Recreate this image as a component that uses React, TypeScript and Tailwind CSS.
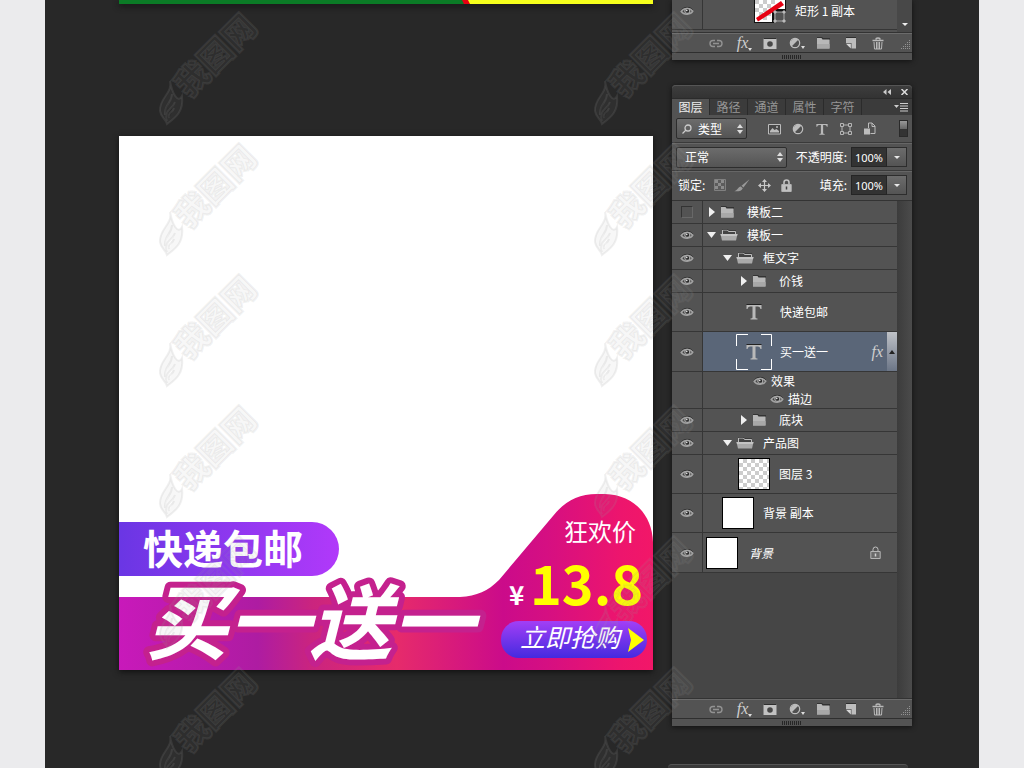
import { useState } from "react";
import type { ReactNode } from "react";

type LayerKind = "folder" | "open" | "text" | "checker" | "white";

type Layer = {
  id: number;
  name: string;
  kind: LayerKind;
  visible: boolean;
  indent: string;
  height: string;
  selected?: boolean;
  locked?: boolean;
};

const LAYERS: Layer[] = [
  { id: 1, name: "模板二", kind: "folder", visible: false, indent: "pl-1", height: "h-[23px]" },
  { id: 2, name: "模板一", kind: "open", visible: true, indent: "pl-1", height: "h-[23px]" },
  { id: 3, name: "框文字", kind: "open", visible: true, indent: "pl-5", height: "h-[23px]" },
  { id: 4, name: "价钱", kind: "folder", visible: true, indent: "pl-9", height: "h-[23px]" },
  { id: 5, name: "快递包邮", kind: "text", visible: true, indent: "pl-[33px]", height: "h-[39px]" },
  { id: 6, name: "买一送一", kind: "text", visible: true, indent: "pl-[33px]", height: "h-10", selected: true },
  { id: 7, name: "底块", kind: "folder", visible: true, indent: "pl-9", height: "h-[23px]" },
  { id: 8, name: "产品图", kind: "open", visible: true, indent: "pl-5", height: "h-[23px]" },
  { id: 9, name: "图层 3", kind: "checker", visible: true, indent: "pl-[35px]", height: "h-[39px]" },
  { id: 10, name: "背景 副本", kind: "white", visible: true, indent: "pl-[19px]", height: "h-[39px]" },
  { id: 11, name: "背景", kind: "white", visible: true, indent: "pl-[3px]", height: "h-10", locked: true },
];

const TABS = ["图层", "路径", "通道", "属性", "字符"];

const WATERMARK_ROWS = [0, 1, 2, 3, 4, 5];

/* ---------- icons ---------- */

const EyeIcon = () => (
  <svg width="14" height="10" viewBox="0 0 14 10" fill="none">
    <path d="M1 4.500C3.500 .6 10 .2 13 4" stroke="#2a2a2a" strokeWidth="1" />
    <path d="M1.200 5.500C3.500 1.800 10 1.500 12.800 5.200C10.800 9 3.800 9.200 1.200 5.500Z" fill="#454545" stroke="#a2a2a2" strokeWidth="1.500" />
    <circle cx="7.300" cy="4.900" r="2.500" fill="#2b2b2b" stroke="#a8a8a8" strokeWidth="1.200" />
    <circle cx="6.700" cy="4.300" r=".9" fill="#d8d8d8" />
  </svg>
);

const FolderIcon = () => (
  <svg width="15" height="12" viewBox="0 0 15 12">
    <path d="M1 1V0H6L7 1H14V3H1Z" fill="#333" />
    <path d="M1 11.500V1H5.500L6.500 2.500H13.500V11.500Z" fill="#b8b8b8" />
    <path d="M1 11.500V7H13.500V11.500Z" fill="#a8a8a8" />
  </svg>
);

const OpenFolderIcon = () => (
  <svg width="18" height="12" viewBox="0 0 18 12" fill="none">
    <path d="M2.500 5V1H7.500L8.500 2.500H15.500V5" fill="#444" stroke="#bdbdbd" />
    <path d="M2 .5H8L9 1.500H16" stroke="#2c2c2c" strokeWidth=".6" />
    <path d="M.5 5H17.500L16 11.500H2Z" fill="#aaa" />
    <path d="M.5 5H17.500L17 7H1Z" fill="#c4c4c4" />
  </svg>
);

const TypeIcon = ({ size = 16 }: { size?: number }) => (
  <svg width={size} height={size} viewBox="0 0 16 16">
    <path d="M.5 0H15.500V1H.5Z" fill="#222" />
    <path d="M.5 1H15.500V5H14.500Q14.200 2.500 12 2.500H9.500V13.500Q9.500 14.500 11.500 14.500V15.500H4.500V14.500Q6.500 14.500 6.500 13.500V2.500H4Q1.800 2.500 1.500 5H.5Z" fill="#b9b9b9" />
  </svg>
);

const LinkIcon = () => (
  <svg width="14" height="9" viewBox="0 0 14 9" fill="none" stroke="#929292" strokeWidth="1.400">
    <path d="M6 1.500H4A3 3 0 0 0 4 7.500H6M8 1.500H10A3 3 0 0 1 10 7.500H8M4 4.500H10" />
  </svg>
);

const FxIcon = ({ arrow = false }: { arrow?: boolean }) => (
  <span className="relative font-['Liberation_Serif',serif] text-base leading-4 text-[#cfcfcf] italic">
    fx
    {arrow && (
      <svg className="absolute -right-1 bottom-0" width="4" height="3" viewBox="0 0 4 3">
        <path d="M0 0H4L2 3Z" fill="#ddd" />
      </svg>
    )}
  </span>
);

const MaskIcon = () => (
  <svg width="14" height="11" viewBox="0 0 14 11">
    <path d="M.5 0H13.500V11H.5Z" fill="#c2c2c2" />
    <path d="M.5 0H13.500V1H.5Z" fill="#2f2f2f" />
    <circle cx="7" cy="6" r="2.800" fill="#474747" />
  </svg>
);

const AdjustIcon = ({ arrow = false }: { arrow?: boolean }) => (
  <svg width="16" height="12" viewBox="0 0 16 12">
    <circle cx="6" cy="6" r="4.700" fill="#505050" stroke="#bcbcbc" strokeWidth="1.200" />
    <path d="M9.500 2.500A5 5 0 0 0 2.500 9.500Z" fill="#bcbcbc" />
    {arrow && <path d="M12 9H16L14 12Z" fill="#ddd" />}
  </svg>
);

const NewLayerIcon = () => (
  <svg width="12" height="12" viewBox="0 0 12 12">
    <path d="M1 0H11V1H1Z" fill="#2f2f2f" />
    <path d="M1 1H11V11.500H6.500V6H1Z" fill="#bdbdbd" />
    <path d="M1 6.800L5.800 11.500V6.800Z" fill="#d8d8d8" />
  </svg>
);

const TrashIcon = () => (
  <svg width="12" height="13" viewBox="0 0 12 13" fill="none" stroke="#b9b9b9">
    <path d="M4 2.500C4 .5 8 .5 8 2.500M.5 3.500H11.500" strokeWidth="1.500" />
    <path d="M2 5L2.500 12H9.500L10 5M4.500 5V12M6 5V12M7.500 5V12" />
  </svg>
);

const ImageIcon = () => (
  <svg width="13" height="12" viewBox="0 0 13 12">
    <path d="M.5 1.500H12.500V11H.5Z" fill="#484848" stroke="#bcbcbc" />
    <path d="M2 9.500V8L4.500 5L6.500 7L8.500 6L11 8V9.500Z" fill="#bcbcbc" />
    <circle cx="9" cy="4" r="1" fill="#bcbcbc" />
  </svg>
);

const ShapeIcon = () => (
  <svg width="12" height="12" viewBox="0 0 12 12" fill="#555" stroke="#b5b5b5">
    <path d="M2 2H10V10H2Z" fill="none" />
    <path d="M.5.5H3.500V3.500H.5ZM8.500.5H11.500V3.500H8.500ZM.5 8.500H3.500V11.500H.5ZM8.500 8.500H11.500V11.500H8.500Z" />
  </svg>
);

const SmartIcon = () => (
  <svg width="12" height="13" viewBox="0 0 12 13" fill="none">
    <path d="M4.500 6V1H8L11 4V11.500H6.500" stroke="#bcbcbc" />
    <path d="M8 1V4.500H11" stroke="#bcbcbc" />
    <path d="M0 6.500H6V12.500H0Z" fill="#bcbcbc" />
  </svg>
);

const LockIcon = ({ thin = false }: { thin?: boolean }) => (
  <svg width="11" height="13" viewBox="0 0 11 13" fill="none">
    <path d="M3 6V3.500A2.500 2.500 0 0 1 8 3.500V6" stroke="#c2c2c2" strokeWidth={thin ? 1 : 1.6} />
    <path d="M.8 5.500H10.200V12.500H.8Z" fill={thin ? "#6a6a6a" : "#c2c2c2"} stroke="#b4b4b4" />
    <path d="M5.500 7.500V10.500" stroke={thin ? "#d0d0d0" : "#444"} strokeWidth="1.500" />
  </svg>
);

const TransparentIcon = () => (
  <svg width="12" height="12" viewBox="0 0 12 12">
    <path d="M.5.5H11.500V11.500H.5Z" fill="#5c5c5c" stroke="#808080" />
    <path d="M1 1H4V4H1ZM7 1H10V4H7ZM4 4H7V7H4ZM1 7H4V10H1ZM7 7H10V10H7Z" fill="#8c8c8c" />
  </svg>
);

const BrushIcon = () => (
  <svg width="16" height="13" viewBox="0 0 16 13" fill="#9a9a9a">
    <path d="M15.500.3L9.500 8.500L7.500 6.800Z" />
    <path d="M6.800 7.500L8.800 9.300C7.500 12.500 4 12.500.3 12.200C3.500 11.500 4 8 6.800 7.500Z" />
  </svg>
);

const MoveIcon = () => (
  <svg width="13" height="13" viewBox="0 0 13 13">
    <path d="M6.500 1V12M1 6.500H12" stroke="#c8c8c8" strokeWidth="1.200" />
    <path d="M6.500 0L9 3H4ZM6.500 13L9 10H4ZM0 6.500L3 4V9ZM13 6.500L10 4V9Z" fill="#c8c8c8" />
  </svg>
);

const UpDownIcon = () => (
  <svg className="pointer-events-none absolute top-1/2 right-1 -translate-y-1/2" width="6" height="10" viewBox="0 0 6 10">
    <path d="M3 0L6 4H0ZM3 10L6 6H0Z" fill="#ddd" />
  </svg>
);

const Disclosure = ({ open }: { open: boolean }) => (
  <svg width="9" height="10" viewBox="0 0 9 10" fill="#f0f0f0">
    {open ? <path d="M0 2H9L4.500 8Z" /> : <path d="M2 0L8 5L2 10Z" />}
  </svg>
);

/* ---------- small parts ---------- */

const IconButton = ({ label, width, children }: { label: string; width: string; children: ReactNode }) => (
  <button type="button" aria-label={label} className={`flex h-4 shrink-0 items-center justify-center ${width}`}>
    {children}
  </button>
);

const PercentField = ({ id, label }: { id: string; label: string }) => {
  const [value, setValue] = useState("100%");

  return (
    <div className="ml-auto flex items-center">
      <label htmlFor={id} className="mr-1 whitespace-nowrap">{label}:</label>
      <input
        id={id}
        value={value}
        onChange={(e) => setValue(e.target.value)}
        className="h-5 w-9 border border-[#252525] bg-[#333] text-center font-['Noto_Sans',sans-serif] text-[11px] text-white"
      />
      <button
        type="button"
        aria-label="展开"
        className="flex h-5 w-5 items-center justify-center border border-l-0 border-[#2d2d2d] bg-linear-to-b from-[#6c6c6c] to-[#545454]"
      >
        <svg width="6" height="3" viewBox="0 0 6 3"><path d="M0 0H6L3 3Z" fill="#e8e8e8" /></svg>
      </button>
    </div>
  );
};

const PanelSelect = ({ label, options, className }: { label: string; options: string[]; className: string }) => (
  <div className="relative">
    <select
      aria-label={label}
      className={`block h-[21px] appearance-none rounded-xs border border-[#2d2d2d] bg-linear-to-b from-[#6c6c6c] to-[#545454] text-white ${className}`}
    >
      {options.map((option) => (
        <option key={option}>{option}</option>
      ))}
    </select>
    <UpDownIcon />
  </div>
);

const PanelFooter = () => (
  <div>
    <div className="flex h-[19px] items-center border-t border-[#6b6b6b] bg-[#535353] pl-[30px]">
      <IconButton label="链接图层" width="w-[27px]"><LinkIcon /></IconButton>
      <IconButton label="图层样式" width="w-[27px]"><FxIcon arrow /></IconButton>
      <IconButton label="图层蒙版" width="w-[27px]"><MaskIcon /></IconButton>
      <IconButton label="调整图层" width="w-[27px]"><AdjustIcon arrow /></IconButton>
      <IconButton label="新建组" width="w-[27px]"><FolderIcon /></IconButton>
      <IconButton label="新建图层" width="w-[27px]"><NewLayerIcon /></IconButton>
      <IconButton label="删除图层" width="w-[27px]"><TrashIcon /></IconButton>
      <svg className="mt-auto mr-px mb-0.5 ml-auto" width="10" height="10" viewBox="0 0 10 10">
        <path d="M8.500 0V10M6.500 2V10M4.500 4V10M2.500 6V10M.5 8V10" stroke="#929292" strokeDasharray="1 1" />
      </svg>
    </div>
    <div className="flex h-2 items-center justify-center border-t border-[#2f2f2f] bg-[#535353]">
      <svg width="20" height="4" viewBox="0 0 20 4">
        <path d="M0 2H20" stroke="#262626" strokeWidth="4" strokeDasharray="1 1" />
      </svg>
    </div>
  </div>
);

const LayerThumb = ({ layer }: { layer: Layer }) => {
  if (layer.kind === "folder" || layer.kind === "open") {
    const open = layer.kind === "open";
    return (
      <div className="flex w-10 items-center gap-1">
        <Disclosure open={open} />
        {open ? <OpenFolderIcon /> : <FolderIcon />}
      </div>
    );
  }
  if (layer.kind === "text") {
    return (
      <div className="relative mr-2 flex size-9 items-center justify-center">
        <TypeIcon />
        {layer.selected && (
          <svg className="absolute inset-0" width="36" height="36" viewBox="0 0 36 36" fill="none" stroke="#fff">
            <path d="M.5 12V.5H12M25 .5H35.500V12M35.500 25V35.500H25M12 35.500H.5V25" />
          </svg>
        )}
      </div>
    );
  }
  return (
    <div className="w-[41px]">
      <div
        className={`size-8 border border-black ${
          layer.kind === "checker"
            ? "bg-[conic-gradient(#ccc_25%,#fff_0_50%,#ccc_0_75%,#fff_0)] bg-size-[8px_8px]"
            : "bg-white"
        }`}
      />
    </div>
  );
};

const Effects = () => (
  <div className="flex h-[37px] border-b border-[#363636] bg-[#535353]">
    <div className="w-[31px] border-r border-[#363636]" />
    <div className="flex flex-col leading-[18px]">
      <div className="flex items-center gap-1 pl-[50px]"><EyeIcon />效果</div>
      <div className="flex items-center gap-1 pl-[67px]"><EyeIcon />描边</div>
    </div>
  </div>
);

const LayerRow = ({ layer, onToggle }: { layer: Layer; onToggle: (id: number) => void }) => (
  <li>
    <div className={`flex border-b border-[#363636] bg-[#535353] ${layer.height}`}>
      <button
        type="button"
        aria-label={`显示 ${layer.name}`}
        aria-pressed={layer.visible}
        onClick={() => onToggle(layer.id)}
        className="flex w-[31px] items-center justify-center border-r border-[#363636]"
      >
        {layer.visible ? <EyeIcon /> : <span className="size-3 border border-[#333] border-r-[#686868] border-b-[#686868]" />}
      </button>
      <div className={`flex min-w-0 flex-1 items-center ${layer.indent} ${layer.selected ? "bg-[#5a6678]" : ""}`}>
        <LayerThumb layer={layer} />
        <span className={layer.locked ? "pl-0.5 italic" : ""}>{layer.name}</span>
        {layer.locked && <span className="mr-4 ml-auto"><LockIcon thin /></span>}
        {layer.selected && (
          <div className="ml-auto flex h-full items-center gap-1">
            <FxIcon />
            <button
              type="button"
              aria-label="折叠效果"
              className="flex h-full w-2.5 items-center justify-center bg-linear-to-b from-[#bfc2c7] to-[#6c7687]"
            >
              <svg width="6" height="4" viewBox="0 0 6 4"><path d="M0 4H6L3 0Z" fill="#222" /></svg>
            </button>
          </div>
        )}
      </div>
    </div>
    {layer.selected && <Effects />}
  </li>
);

const LayersPanel = () => {
  const [layers, setLayers] = useState(LAYERS);
  const [activeTab, setActiveTab] = useState(TABS[0]);

  const handleToggle = (id: number) => {
    setLayers(layers.map((layer) => (layer.id === id ? { ...layer, visible: !layer.visible } : layer)));
  };

  return (
    <section className="mt-[25px] rounded-t-sm bg-[#535353] shadow-[0_1px_5px_#111]">
      <header className="flex h-[13px] items-center justify-end gap-2.5 rounded-t-sm border-t border-[#555] bg-linear-to-b from-[#3d3d3d] to-[#333] pr-1">
        <button type="button" aria-label="折叠面板">
          <svg width="8" height="6" viewBox="0 0 8 6" fill="#ccc"><path d="M3.500 0V6L0 3ZM8 0V6L4.500 3Z" /></svg>
        </button>
        <button type="button" aria-label="关闭面板">
          <svg width="7" height="6" viewBox="0 0 7 6" stroke="#ddd" strokeWidth="1.500"><path d="M.5 0L6.500 6M6.500 0L.5 6" /></svg>
        </button>
      </header>

      <div className="flex h-[17px] bg-[#3b3b3b]" role="tablist">
        {TABS.map((tab) => (
          <button
            key={tab}
            type="button"
            role="tab"
            aria-selected={tab === activeTab}
            onClick={() => setActiveTab(tab)}
            className={`w-[38px] border-t border-r border-[#2b2b2b] leading-4 ${
              tab === activeTab ? "bg-[#535353] text-[#eee]" : "text-[#969696]"
            }`}
          >
            {tab}
          </button>
        ))}
        <button type="button" aria-label="面板菜单" className="flex flex-1 items-center justify-end border-t border-[#2b2b2b] pr-1">
          <svg width="14" height="9" viewBox="0 0 14 9">
            <path d="M0 2H5L2.500 5Z" fill="#ccc" />
            <path d="M6 .5H14M6 3H14M6 5.500H14M6 8H14" stroke="#ccc" />
          </svg>
        </button>
      </div>

      <div className="flex h-7 items-center border-b border-[#3a3a3a] pr-1 pl-1">
        <div className="relative">
          <PanelSelect label="图层过滤" options={["类型", "名称", "效果"]} className="w-[71px] pl-[21px]" />
          <svg className="pointer-events-none absolute top-1.5 left-1.5" width="10" height="10" viewBox="0 0 10 10" fill="none" stroke="#ccc" strokeWidth="1.300">
            <circle cx="6" cy="4" r="3" />
            <path d="M4 6L.5 9.500" />
          </svg>
        </div>
        <div className="flex pl-[15px]">
          <IconButton label="像素图层" width="w-6"><ImageIcon /></IconButton>
          <IconButton label="调整图层过滤" width="w-6"><span className="pl-1"><AdjustIcon /></span></IconButton>
          <IconButton label="文字图层" width="w-6"><TypeIcon size={12} /></IconButton>
          <IconButton label="形状图层" width="w-6"><ShapeIcon /></IconButton>
          <IconButton label="智能对象" width="w-6"><SmartIcon /></IconButton>
        </div>
        <button type="button" aria-label="过滤开关" className="ml-auto flex h-[17px] w-[9px] flex-col border border-[#2a2a2a] bg-[#333]">
          <span className="h-2 w-full bg-linear-to-b from-[#999] to-[#666]" />
        </button>
      </div>

      <div className="flex h-7 items-center border-t border-b border-t-[#666] border-b-[#3a3a3a] pr-[5px] pl-1">
        <PanelSelect label="混合模式" options={["正常", "溶解", "正片叠底"]} className="w-[111px] pl-2" />
        <PercentField id="opacity" label="不透明度" />
      </div>

      <div className="flex h-[29px] items-center border-t border-[#666] pr-[5px] pb-0.5 pl-1.5">
        <span>锁定:</span>
        <div className="flex pl-1">
          <IconButton label="锁定透明像素" width="w-[22px]"><TransparentIcon /></IconButton>
          <IconButton label="锁定图像像素" width="w-[22px]"><BrushIcon /></IconButton>
          <IconButton label="锁定位置" width="w-[22px]"><MoveIcon /></IconButton>
          <IconButton label="锁定全部" width="w-[22px]"><LockIcon /></IconButton>
        </div>
        <PercentField id="fill" label="填充" />
      </div>

      <div className="flex h-[499px] border-y border-[#333] bg-[#464646]">
        <ul className="min-w-0 flex-1">
          {layers.map((layer) => (
            <LayerRow key={layer.id} layer={layer} onToggle={handleToggle} />
          ))}
        </ul>
        <div className="w-[15px] bg-linear-to-r from-[#3c3c3c] to-[#4b4b4b]" />
      </div>
      <PanelFooter />
    </section>
  );
};

const UpperPanel = () => (
  <section className="bg-[#535353] shadow-[0_1px_5px_#111]">
    <div className="flex h-[33px] border-b border-[#333]">
      <div className="flex h-[30px] min-w-0 flex-1 border-b border-[#363636]">
        <button type="button" aria-label="显示 矩形 1 副本" className="flex h-[22px] w-[30px] items-center justify-center">
          <EyeIcon />
        </button>
        <div className="flex flex-1 border-l border-[#363636] pl-[51px]">
          <svg width="32" height="23" viewBox="0 0 32 23">
            <path d="M0 0H32V12H20V23H0Z" fill="#111" />
            <path d="M1 0H31V9H18V22H1Z" fill="#fff" />
            <path d="M1 0H5V4H1ZM9 0H13V4H9ZM17 0H21V4H17ZM5 4H9V8H5ZM13 4H17V8H13ZM1 8H5V12H1ZM9 8H13V12H9ZM5 12H9V16H5ZM13 12H17V16H13ZM9 16H13V20H9Z" fill="#ccc" />
            <path d="M2 18L27 1L30 5L4 21.500Z" fill="#e60012" />
            <path d="M21 12H30V21H21Z" fill="#535353" stroke="#aaa" />
            <path d="M20 11H22V13H20ZM29 11H31V13H29ZM20 20H22V22H20ZM29 20H31V22H29Z" fill="#bbb" stroke="#bbb" />
          </svg>
          <span className="pl-[9px] leading-[22px]">矩形 1 副本</span>
        </div>
      </div>
      <div className="flex w-[15px] items-end justify-center bg-[#484848] pb-1.5">
        <svg width="6" height="3" viewBox="0 0 6 3"><path d="M0 0H6L3 3Z" fill="#eee" /></svg>
      </div>
    </div>
    <PanelFooter />
  </section>
);

/* ---------- artwork ---------- */

const Poster = () => (
  <svg className="mt-[132px] block w-full bg-white shadow-[0_2px_6px_#111]" viewBox="0 0 534 534" fontFamily="'Noto Sans CJK SC', sans-serif">
    <defs>
      <linearGradient id="base">
        <stop offset="0" stopColor="#c819ba" />
        <stop offset=".26" stopColor="#ae1ca2" />
        <stop offset=".36" stopColor="#ca247f" />
        <stop offset=".52" stopColor="#e62b6b" />
        <stop offset=".72" stopColor="#cb0b8a" />
        <stop offset=".8" stopColor="#d50f82" />
        <stop offset=".94" stopColor="#ed156d" />
        <stop offset="1" stopColor="#f21768" />
      </linearGradient>
      <linearGradient id="ribbon">
        <stop offset="0" stopColor="#6a36e4" />
        <stop offset="1" stopColor="#b139fa" />
      </linearGradient>
      <linearGradient id="cta" x2="0" y2="1">
        <stop offset="0" stopColor="#a23ff6" />
        <stop offset="1" stopColor="#452adf" />
      </linearGradient>
    </defs>
    <path d="M0 461H341C358 460 369 455 380 444L434 380C446 365 459 358 478 358H486C514 359 533 378 534 406V534H0Z" fill="url(#base)" />
    <path d="M0 386H193A27 27 0 0 1 193 440H0Z" fill="url(#ribbon)" />
    <text x="24" y="428" fontSize="40" fontWeight="700" fill="#fff">快递包邮</text>
    <text x="27" y="517" fontSize="82" fontWeight="700" fontStyle="italic" fill="#fff" stroke="#c4218e" strokeWidth="12" strokeLinejoin="round" paintOrder="stroke">
      买一送一
    </text>
    <text x="445" y="405" fontSize="24" fill="#fff">狂欢价</text>
    <text x="390" y="469" fontSize="26" fontWeight="700" fill="#fff">¥</text>
    <text x="411" y="469" fontSize="54" fontWeight="700" fill="#ff0">13.8</text>
    <rect x="382" y="485" width="146" height="37" rx="18" fill="url(#cta)" />
    <text x="401" y="511" fontSize="25" fontStyle="italic" fill="#fff">立即抢购</text>
    <path d="M509 492L525 504L509 516L512 504Z" fill="#ff0" />
  </svg>
);

const Watermark = () => (
  <svg className="overflow-visible" width="110" height="131" viewBox="0 0 110 131" fill="none" stroke="#999" strokeOpacity=".15" strokeWidth="2">
    <path
      d="M12 81C15 93 1 98 2 111C3 118 8 119 9 124C17 118 26 112 24 96C20 104 14 93 12 81ZM7 115C6 104 14 103 14 94M9 121C6 110 14 110 17 102M11 118C9 112 15 113 16 108"
      fill="#888"
      fillOpacity=".07"
    />
    <text
      transform="translate(31 99) rotate(-45)"
      fontFamily="'Noto Sans CJK SC', sans-serif"
      fontSize="33"
      fontWeight="900"
      fill="#888"
      fillOpacity=".07"
    >
      我图网
    </text>
  </svg>
);

export default function App() {
  return (
    <div className="h-screen overflow-hidden bg-[#ebebed] px-[45px] font-['Noto_Sans_CJK_SC',sans-serif] text-xs text-white">
      <main className="relative flex h-full justify-center overflow-hidden bg-[#282828]">
        <div className="mr-[19px] ml-[7px] w-[534px] shrink-0">
          <svg className="block h-1 w-full shadow-[0_2px_6px_#111]" viewBox="0 0 534 4" preserveAspectRatio="none">
            <path d="M0 0H534V4H0Z" fill="#0b7b26" />
            <path d="M343 0H534V4H345Z" fill="#e60012" />
            <path d="M349 0H534V4H351Z" fill="#f6ff1c" />
          </svg>
          <Poster />
        </div>

        <aside className="w-60 shrink-0">
          <UpperPanel />
          <LayersPanel />
          <div className="mt-[38px] mr-1 -ml-1 flex h-4 justify-end gap-2.5 rounded-t-sm border-t border-[#555] bg-[#3a3a3a] pt-1 pr-1">
            <svg width="8" height="6" viewBox="0 0 8 6" fill="#ccc"><path d="M3.500 0V6L0 3ZM8 0V6L4.500 3Z" /></svg>
            <svg width="7" height="6" viewBox="0 0 7 6" stroke="#ddd" strokeWidth="1.500"><path d="M.5 0L6.500 6M6.500 0L.5 6" /></svg>
          </div>
        </aside>

        {/* Watermark tiles over the whole canvas */}
        <div className="pointer-events-none absolute inset-x-0 top-0 flex justify-center gap-[325px] pr-[164px]" aria-hidden="true">
          {["left", "right"].map((column) => (
            <div key={column}>
              {WATERMARK_ROWS.map((row) => (
                <Watermark key={row} />
              ))}
            </div>
          ))}
        </div>
      </main>
    </div>
  );
}
